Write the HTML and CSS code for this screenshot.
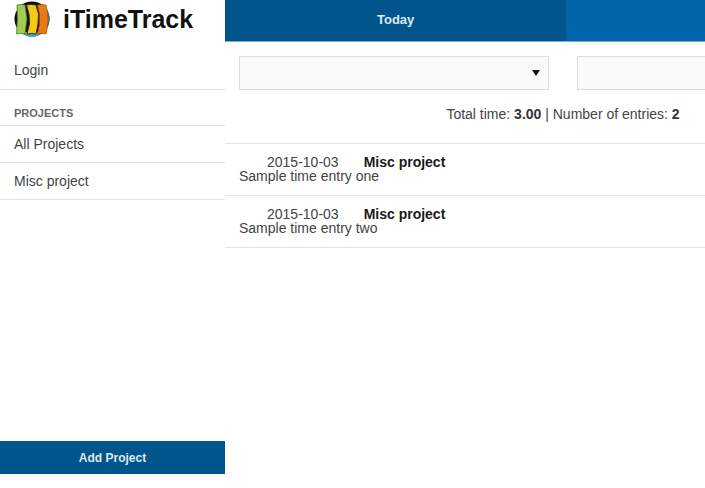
FILE: index.html
```html
<!DOCTYPE html>
<html lang="en">
<head>
<meta charset="utf-8">
<title>iTimeTrack</title>
<link rel="stylesheet" href="styles.css">
</head>
<body>
<div class="app">
  <aside class="sidebar">
    <header class="brand">
      <svg class="logo" viewBox="0 0 36 38" aria-hidden="true">
        <circle cx="18" cy="19" r="17.5" fill="#0a0d10"/>
        <path d="M31 7Q36 13 35.500 19T31 32Z" fill="#3f7f99"/>
        <path d="M7 32Q18 42 29 32Z" fill="#3fa5cb"/>
        <path d="M3 5Q7 4 11 5L13 19L11 34Q7 33 2.500 34Q4 19 3 5Z" fill="#a2cb52" stroke="#4e642a" stroke-width=".7"/>
        <path d="M12.500 5Q17 4 22 5L24.500 14L24 24L22 34Q18 33 13 34L15.500 24L15 14Z" fill="#f8c914" stroke="#3d3210" stroke-width="1"/>
        <path d="M23.500 5Q28 4 32 5Q36 19 32 34Q28 33 23.500 34L25.500 24V14Z" fill="#e77b10" stroke="#934c12" stroke-width=".7"/>
      </svg>
      <h1>iTimeTrack</h1>
    </header>
    <nav class="menu">
      <a href="#">Login</a>
      <h2>PROJECTS</h2>
      <a href="#">All Projects</a>
      <a href="#">Misc project</a>
    </nav>
    <button class="add" type="button">Add Project</button>
  </aside>
  <main class="main">
    <div class="content">
      <div class="tabs">
        <button class="tab active" type="button">Today</button>
        <button class="tab" type="button" aria-label="All entries"></button>
      </div>
      <div class="filters">
        <select aria-label="Project"><option></option></select>
        <select aria-label="Period"><option></option></select>
      </div>
      <p class="summary">Total time: <b>3.00</b> | Number of entries: <b>2</b></p>
      <ul class="entries">
        <li>
          <div class="meta"><time datetime="2015-10-03">2015-10-03</time><b>Misc project</b></div>
          <div>Sample time entry one</div>
        </li>
        <li>
          <div class="meta"><time datetime="2015-10-03">2015-10-03</time><b>Misc project</b></div>
          <div>Sample time entry two</div>
        </li>
      </ul>
    </div>
  </main>
</div>
</body>
</html>
```
FILE: styles.css
```css
* { box-sizing: border-box; }
body {
  margin: 0;
  background: #fff;
  color: #444;
  font: 14px/14px "Liberation Sans", Arial, sans-serif;
}
h1, h2, p, ul { margin: 0; padding: 0; }
button { border: 0; color: #dceaf4; font: bold 13px/14px "Liberation Sans", Arial, sans-serif; }
.app { display: flex; min-height: 100vh; }
.sidebar {
  display: flex;
  flex: 0 0 225px;
  flex-direction: column;
  padding-bottom: 14px;
}
.brand { display: flex; align-items: center; gap: 13px; height: 52px; padding: 0 14px 14px; }
.logo { flex: none; width: 36px; height: 38px; }
h1 { color: #111; font-size: 25px; line-height: 38px; }
.menu { display: flex; flex-direction: column; }
.menu a {
  padding: 11px 14px;
  border-bottom: 1px solid #e2e2e2;
  color: #444;
  line-height: 14px;
  text-decoration: none;
}
.menu a:first-child { padding-bottom: 12px; }
h2 {
  padding: 17px 14px 6px;
  border-bottom: 1px solid #e2e2e2;
  color: #666;
  font-size: 11px;
  line-height: 12px;
}
.add {
  height: 33px;
  margin-top: auto;
  background: #00568c;
  font-size: 12px;
}
.main { flex: 1; min-width: 0; overflow: hidden; }
.content { min-width: 676px; }
.tabs { display: flex; height: 42px; background: #0065a8; border-bottom: 1px solid #79adcf; }
.tab { flex: 1; padding: 0 0 2px; background: #0065a8; }
.tab.active { flex-grow: 1.02; background: #00568c; }
.filters { display: flex; gap: 28px; padding: 14px 14px 0; }
.filters select {
  flex: 1;
  min-width: 0;
  height: 34px;
  border: 1px solid #dedede;
  border-radius: 0;
  appearance: none;
  background: #fafafa url("data:image/svg+xml,%3Csvg xmlns='http://www.w3.org/2000/svg' width='8' height='6'%3E%3Cpath d='M0 0H8L4 6Z' fill='%23111'/%3E%3C/svg%3E") no-repeat right 8px center;
}
.summary { padding: 17px 14px 22px; text-align: center; }
.summary b { color: #333; }
.entries { border-top: 1px solid #e2e2e2; list-style: none; }
.entries li { padding: 11px 14px 12px; border-bottom: 1px solid #e2e2e2; }
.meta { display: flex; gap: 25px; padding-left: 28px; }
.meta b { color: #1a1a1a; }
```
